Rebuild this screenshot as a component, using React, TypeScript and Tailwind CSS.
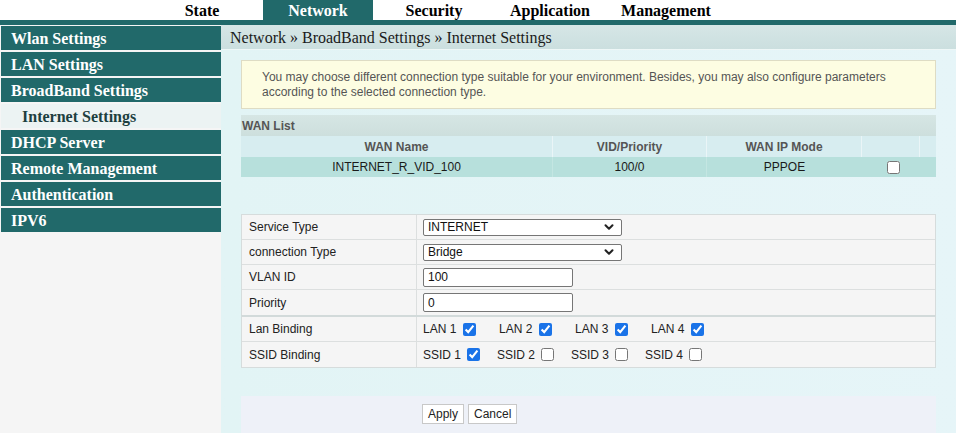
import React from 'react';
import { ChevronDown } from 'lucide-react';

const tabs = ['State', 'Network', 'Security', 'Application', 'Management'];

const sideItems = [
  { label: 'Wlan Settings' },
  { label: 'LAN Settings' },
  { label: 'BroadBand Settings' },
  { label: 'Internet Settings', sub: true },
  { label: 'DHCP Server' },
  { label: 'Remote Management' },
  { label: 'Authentication' },
  { label: 'IPV6' },
];

const FakeSelect = ({ value }: { value: string }) => (
  <div className="w-[199px] h-[17px] border border-[#767676] rounded-[2px] bg-white flex items-center justify-between pl-[4px] pr-[5px] text-[12px] text-[#111]">
    <span>{value}</span>
    <ChevronDown size={14} strokeWidth={3.5} className="text-[#222]" />
  </div>
);

const FakeInput = ({ value }: { value: string }) => (
  <div className="w-[150px] h-[19px] border border-[#767676] rounded-[2px] bg-white flex items-center pl-[4px] text-[12px] text-[#111]">
    {value}
  </div>
);

const Check = ({ checked }: { checked?: boolean }) => (
  <input type="checkbox" defaultChecked={checked} className="m-0 w-[13px] h-[13px] accent-[#1a73e8]" />
);

const FormRow = ({ label, children, last }: { label: string; children: React.ReactNode; last?: boolean }) => (
  <div className={`flex h-[25px] ${last ? '' : 'border-b border-[#dcdfdf]'}`}>
    <div className="w-[175px] border-r border-[#dcdfdf] pl-[7px] flex items-center">{label}</div>
    <div className="flex-1 pl-[6px] flex items-center">{children}</div>
  </div>
);

export default function App() {
  return (
    <div className="w-[956px] h-[433px] overflow-hidden bg-white flex flex-col font-['Liberation_Sans',Arial,sans-serif]">
      {/* top tabs */}
      <div className="h-[20px] flex gap-[6px] pl-[147px] font-['Liberation_Serif',serif] font-bold text-[16px]">
        {tabs.map((t) => (
          <div
            key={t}
            className={`w-[110px] flex items-center justify-center leading-none pt-[1px] ${t === 'Network' ? 'bg-[#21696a] text-white' : 'text-black'}`}
          >
            {t}
          </div>
        ))}
      </div>
      <div className="h-[5px] bg-[#21696a]" />

      <div className="flex flex-1 min-h-0">
        {/* sidebar */}
        <div className="w-[221px] bg-[#f5f5f5] pl-[1px] pt-[1px] flex flex-col gap-[2px] font-['Liberation_Serif',serif] font-bold text-[16px]">
          {sideItems.map((it) =>
            it.sub ? (
              <div key={it.label} className="h-[24px] flex items-center pl-[21px] pt-[1px] text-[#1d3f3f] bg-[#ecf3f3]">
                {it.label}
              </div>
            ) : (
              <div key={it.label} className="h-[24px] flex items-center pl-[10px] pt-[1px] text-white bg-[#21696a]">
                {it.label}
              </div>
            )
          )}
        </div>

        {/* main */}
        <div className="flex-1 bg-gradient-to-r from-[#e2f4f5] to-[#e6f5f8] flex flex-col">
          <div className="h-[25px] bg-gradient-to-b from-[#d6e6e6] to-[#cbdfdf] border-b border-[#eef7f7] pl-[9px] pt-[2px] flex items-center font-['Liberation_Serif',serif] text-[16px] text-[#1a1a1a]">
            Network » BroadBand Settings » Internet Settings
          </div>

          <div className="px-[20px] flex flex-col flex-1">
            {/* notice */}
            <div className="mt-[10px] h-[49px] border border-[#dedcc4] bg-[#fdfde2] pl-[20px] pr-[20px] pt-[9px] text-[12px] leading-[15px] text-[#555]">
              You may choose different connection type suitable for your environment. Besides, you may also configure parameters according to the selected connection type.
            </div>

            {/* wan list */}
            <div className="mt-[6px] h-[21px] bg-gradient-to-b from-[#d6e6e4] to-[#cddfdd] flex items-center pl-[1px] text-[12px] font-bold text-[#555]">
              WAN List
            </div>
            <div className="flex h-[21px] bg-[#d7edf0] text-[12px] font-bold text-[#555]">
              <div className="w-[312px] flex items-center justify-center border-r border-[#eaf5f7]">WAN Name</div>
              <div className="w-[154px] flex items-center justify-center border-r border-[#eaf5f7]">VID/Priority</div>
              <div className="w-[155px] flex items-center justify-center border-r border-[#eaf5f7]">WAN IP Mode</div>
              <div className="w-[58px] border-r border-[#eaf5f7]" />
              <div className="flex-1" />
            </div>
            <div className="flex h-[20px] bg-[#b7e0dc] text-[12px] text-[#1a1a1a]">
              <div className="w-[312px] flex items-center justify-center border-r border-[#c4e6e2]">INTERNET_R_VID_100</div>
              <div className="w-[154px] flex items-center justify-center border-r border-[#c4e6e2]">100/0</div>
              <div className="w-[155px] flex items-center justify-center">PPPOE</div>
              <div className="w-[62px] flex items-center justify-center">
                <Check />
              </div>
              <div className="flex-1" />
            </div>

            {/* form */}
            <div className="mt-[37px] border border-[#d6dcdc] bg-[#f5f5f5] text-[12px] text-[#222]">
              <FormRow label="Service Type">
                <FakeSelect value="INTERNET" />
              </FormRow>
              <FormRow label="connection Type">
                <FakeSelect value="Bridge" />
              </FormRow>
              <FormRow label="VLAN ID">
                <FakeInput value="100" />
              </FormRow>
              <FormRow label="Priority" last>
                <FakeInput value="0" />
              </FormRow>
            </div>
            <div className="border border-t-2 border-[#d6dcdc] border-t-[#d2dada] bg-[#f5f5f5] text-[12px] text-[#222] -mt-[1px]">
              <FormRow label="Lan Binding">
                {['LAN 1', 'LAN 2', 'LAN 3', 'LAN 4'].map((l) => (
                  <div key={l} className="w-[76px] flex items-center gap-[7px]">
                    <span>{l}</span>
                    <Check checked />
                  </div>
                ))}
              </FormRow>
              <FormRow label="SSID Binding" last>
                {['SSID 1', 'SSID 2', 'SSID 3', 'SSID 4'].map((l, i) => (
                  <div key={l} className="w-[74px] flex items-center gap-[6px]">
                    <span>{l}</span>
                    <Check checked={i === 0} />
                  </div>
                ))}
              </FormRow>
            </div>

            {/* buttons */}
            <div className="mt-[28px] flex-1 bg-[#eef1f8] pt-[8px] pl-[181px] flex items-start gap-[4px] text-[12px] text-[#222]">
              <button className="h-[20px] px-[5px] bg-white border border-[#c8c8c8]">Apply</button>
              <button className="h-[20px] px-[5px] bg-white border border-[#c8c8c8]">Cancel</button>
            </div>
          </div>
        </div>
      </div>
    </div>
  );
}
